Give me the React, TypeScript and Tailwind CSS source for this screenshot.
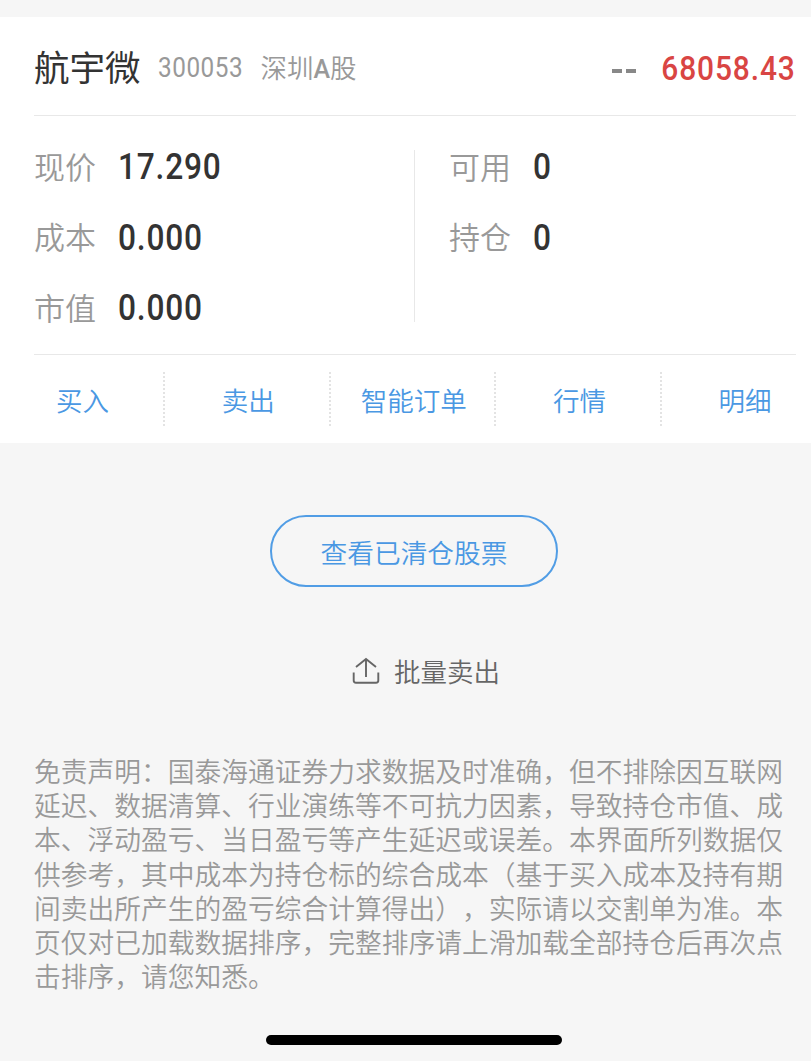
const quotes = [
  { label: '现价', value: '17.290' },
  { label: '成本', value: '0.000' },
  { label: '市值', value: '0.000' },
];

const holdings = [
  { label: '可用', value: '0' },
  { label: '持仓', value: '0' },
];

const actions = ['买入', '卖出', '智能订单', '行情', '明细'];

const disclaimer = [
  '免责声明：国泰海通证券力求数据及时准确，但不排除因互联网',
  '延迟、数据清算、行业演练等不可抗力因素，导致持仓市值、成',
  '本、浮动盈亏、当日盈亏等产生延迟或误差。本界面所列数据仅',
  '供参考，其中成本为持仓标的综合成本（基于买入成本及持有期',
  '间卖出所产生的盈亏综合计算得出），实际请以交割单为准。本',
  '页仅对已加载数据排序，完整排序请上滑加载全部持仓后再次点',
  '击排序，请您知悉。',
];

function Field({ label, value }: { label: string; value: string }) {
  return (
    <div className="flex h-[70.5px] items-center">
      <span className="w-[83.500px] pb-[4px] text-[31px] font-[350] text-[#999]">{label}</span>
      <span className="origin-left scale-x-[0.88] font-['Roboto'] text-[36px] font-medium tracking-[0.9px] text-[#333]">
        {value}
      </span>
    </div>
  );
}

function ShareIcon() {
  return (
    <svg width="28" height="28" viewBox="0 0 28 28" fill="none" stroke="#666" strokeWidth="1.9">
      <path d="M14 20V2.500M4 10L14 2l10 8" />
      <path d="M1.700 15.500V23.500Q1.700 25.700 4 25.700H24Q26.300 25.700 26.300 23.500V15.500" />
    </svg>
  );
}

export default function App() {
  return (
    <div className="flex h-[1061px] w-[811px] flex-col overflow-hidden bg-[#f6f6f6] pt-[17px] font-['Noto_Sans_CJK_SC',sans-serif] leading-none whitespace-nowrap">
      <section className="h-[426px] bg-white">
        <header className="ml-[34px] mr-[15px] flex h-[99px] items-center border-b border-[#e8e8e8]">
          <h1 className="pb-[1px] text-[35.500px] font-normal text-[#333]">航宇微</h1>
          <span className="ml-[17.500px] w-[84.500px] origin-left scale-x-[0.9] pt-[4px] font-['Roboto'] text-[27px] font-[450] tracking-[0.6px] text-[#999]">
            300053
          </span>
          <span className="ml-[18px] pt-[3px] text-[26.500px] font-[350] text-[#999]">
            深圳<span className="font-['Roboto'] text-[25px] font-medium">A</span>股
          </span>
          <span className="ml-auto flex gap-1 pt-[9px]" aria-label="--">
            <span className="h-[4px] w-[10px] bg-[#888]" />
            <span className="h-[4px] w-[10px] bg-[#888]" />
          </span>
          <span className="ml-[7px] origin-right scale-x-[0.88] pt-[4px] font-['Roboto'] text-[34px] font-medium tracking-[1px] text-[#d94543]">
            68058.43
          </span>
        </header>

        <div className="ml-[34px] mr-[15px] flex h-[239px] border-b border-[#e8e8e8] pt-[16px]">
          <div className="w-[380px]">
            {quotes.map((q) => (
              <Field key={q.label} {...q} />
            ))}
          </div>
          <div className="mt-[18px] h-[172px] w-px bg-[#e8e8e8]" />
          <div className="pl-[34px]">
            {holdings.map((h) => (
              <Field key={h.label} {...h} />
            ))}
          </div>
        </div>

        <nav className="-ml-[0.700px] flex h-[88px] items-center">
          {actions.map((a, i) => (
            <div key={a} className="flex w-[165.600px] shrink-0 items-center">
              <button className="h-[54px] flex-1 pt-[2px] pl-[3px] text-[26.500px] font-[350] text-[#4a98e3] last:pl-[1px]">
                {a}
              </button>
              {i < actions.length - 1 && (
                <span className="h-[54px] w-[2px] bg-[repeating-linear-gradient(to_bottom,#e3e3e3_0_2px,transparent_2px_4px)]" />
              )}
            </div>
          ))}
        </nav>
      </section>

      <button className="mt-[72px] ml-[270px] h-[72px] w-[288px] rounded-full border-2 border-[#519de5] pt-[2px] text-[26.700px] font-[350] text-[#4a98e3]">
        查看已清仓股票
      </button>

      <button className="mt-[66px] ml-[352px] flex h-[36px] w-[160px] items-center gap-[14px] text-[26.500px] font-[350] text-[#666]">
        <ShareIcon />
        批量卖出
      </button>

      <div className="mt-[65px] ml-[34px] text-[26.750px] leading-[34.200px] font-[350] text-[#999] [text-spacing-trim:space-all]">
        {disclaimer.map((line) => (
          <p key={line}>{line}</p>
        ))}
      </div>

      <div className="mt-auto mb-[16px] ml-[266px] h-[10px] w-[296px] rounded-full bg-black" />
    </div>
  );
}
